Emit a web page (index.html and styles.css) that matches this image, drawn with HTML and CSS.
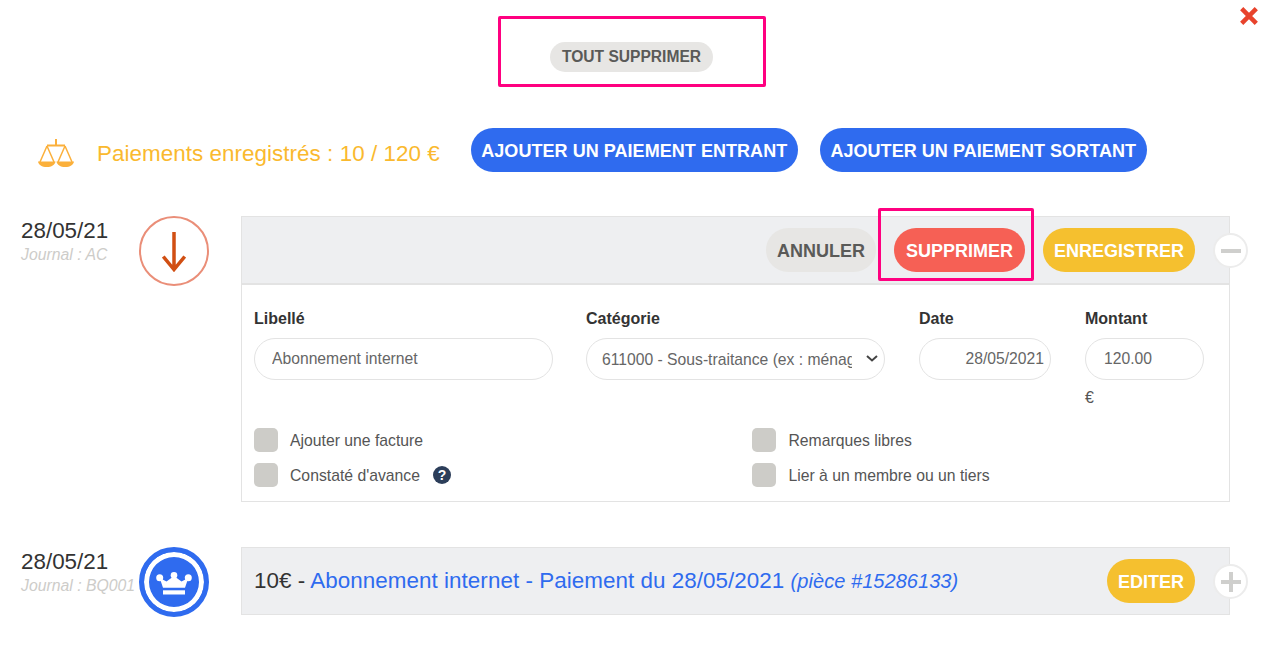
FILE: index.html
```html
<!DOCTYPE html>
<html lang="fr">
<head>
    <meta charset="UTF-8">
    <title>Paiements</title>
    <link rel="stylesheet" href="styles.css">
</head>
<body>
    <div class="modal">
        <svg class="close" viewBox="0 0 18 18" width="18" height="18"><path d="M1.700 1.700l14.600 14.600M16.300 1.700L1.700 16.300" stroke="#e8432c" stroke-width="4.500"/></svg>

        <div class="top-actions">
            <button class="btn-clear">TOUT SUPPRIMER</button>
            <div class="highlight highlight-top"></div>
        </div>

        <div class="summary">
            <svg class="scale-icon" viewBox="0 0 36 28" width="36" height="28" fill="none" stroke="#fbb03b" stroke-width="1.500">
                <path d="M18 0v7M9 6.500h18" stroke-width="2"/>
                <path d="M9 7L2 23M9 7l7 16M27 7l-7 16M27 7l7 16"/>
                <path d="M0 22.500h17.500c-.5 3.500-4 5.500-8.750 5.500S.5 26 0 22.500zM18.500 22.500H36c-.5 3.500-4 5.500-8.750 5.500S19 26 18.500 22.500z" fill="#fbb03b" stroke="none"/>
            </svg>
            <span class="summary-text">Paiements enregistrés : 10 / 120 €</span>
            <button class="btn btn-blue">AJOUTER UN PAIEMENT ENTRANT</button>
            <button class="btn btn-blue">AJOUTER UN PAIEMENT SORTANT</button>
        </div>

        <div class="payment payment-open">
            <div class="payment-date">
                <div class="date">28/05/21</div>
                <div class="journal">Journal : AC</div>
            </div>
            <div class="status status-out">
                <svg viewBox="0 0 24 40" width="24" height="40" fill="none" stroke="#d14f13" stroke-width="3.500"><path d="M12 0v37M1.300 24.500L12 37.500 22.700 24.500"/></svg>
            </div>
            <div class="panel">
                <div class="panel-head">
                    <button class="btn btn-grey">ANNULER</button>
                    <div class="delete-wrap">
                        <button class="btn btn-red">SUPPRIMER</button>
                        <div class="highlight highlight-delete"></div>
                    </div>
                    <button class="btn btn-yellow">ENREGISTRER</button>
                </div>
                <div class="toggle">
                    <svg viewBox="0 0 20 20" width="20" height="20"><path d="M0 10h20" stroke="#cfcfcd" stroke-width="4"/></svg>
                </div>
                <div class="panel-body">
                    <div class="fields">
                        <div class="field field-label">
                            <label>Libellé</label>
                            <input type="text" class="input input-label" value="Abonnement internet">
                        </div>
                        <div class="field field-category">
                            <label>Catégorie</label>
                            <div class="select-wrap">
                                <select class="input input-select">
                                    <option>611000 - Sous-traitance (ex : ménage, comptable...)</option>
                                </select>
                                <svg class="select-arrow" viewBox="0 0 12 7" width="12" height="7" fill="none" stroke="#444" stroke-width="2"><path d="M1 1l5 4.500L11 1"/></svg>
                            </div>
                        </div>
                        <div class="field field-date">
                            <label>Date</label>
                            <input type="text" class="input input-date" value="28/05/2021">
                        </div>
                        <div class="field field-amount">
                            <label>Montant</label>
                            <input type="text" class="input input-amount" value="120.00">
                            <span class="currency">€</span>
                        </div>
                    </div>
                    <div class="options">
                        <div class="option"><span class="check"></span><span class="option-text">Ajouter une facture</span></div>
                        <div class="option"><span class="check"></span><span class="option-text">Remarques libres</span></div>
                        <div class="option">
                            <span class="check"></span><span class="option-text">Constaté d'avance</span>
                            <span class="help">?</span>
                        </div>
                        <div class="option"><span class="check"></span><span class="option-text">Lier à un membre ou un tiers</span></div>
                    </div>
                </div>
            </div>
        </div>

        <div class="payment">
            <div class="payment-date">
                <div class="date">28/05/21</div>
                <div class="journal">Journal : BQ001</div>
            </div>
            <div class="status status-crown">
                <svg viewBox="0 0 36 23" width="36" height="23" fill="#fff">
                    <circle cx="3.700" cy="5.700" r="3.500"/><circle cx="18" cy="3.300" r="3.300"/><circle cx="32.300" cy="5.700" r="3.500"/>
                    <path d="M3.700 6l6.800 3.500L18 4l7.500 5.500L32.300 6 29 15.700H7z"/>
                    <path d="M7 18.300h22v4.200H7z"/>
                </svg>
            </div>
            <div class="panel">
                <div class="panel-head panel-line">
                    <div class="line-text">10€ - <span class="line-link">Abonnement internet - Paiement du 28/05/2021</span> <em class="line-ref">(pièce #15286133)</em></div>
                    <button class="btn btn-yellow">EDITER</button>
                </div>
                <div class="toggle">
                    <svg viewBox="0 0 20 20" width="20" height="20"><path d="M0 10h20M10 0v20" stroke="#cfcfcd" stroke-width="4"/></svg>
                </div>
            </div>
        </div>
    </div>
</body>
</html>
```

FILE: styles.css
```css
* {
    box-sizing: border-box;
}
body {
    margin: 0;
    font-family: "Liberation Sans", Arial, sans-serif;
    color: #333;
    background: #fff;
}
button {
    font-family: inherit;
    border: none;
    cursor: pointer;
}
.modal {
    position: relative;
    height: 655px;
    overflow: hidden;
    padding-top: 42px;
}
.close {
    position: absolute;
    top: 7px;
    right: 6px;
}
.highlight {
    position: absolute;
    border: 3px solid #ff0080;
    border-radius: 2px;
    pointer-events: none;
}
.top-actions {
    position: relative;
    width: 163px;
    margin: 0 auto 0 550px;
}
.highlight-top {
    left: -52px;
    top: -26px;
    width: 268px;
    height: 71px;
}
.btn-clear {
    display: block;
    width: 163px;
    height: 30px;
    padding: 0;
    border-radius: 15px;
    background: #e7e6e4;
    color: #5a5a58;
    font-size: 15.600px;
    font-weight: bold;
}
.summary {
    display: flex;
    align-items: center;
    height: 44px;
    margin-top: 56px;
    padding-left: 38px;
}
.scale-icon {
    margin-top: 6px;
}
.summary-text {
    margin-left: 23px;
    margin-right: 31px;
    padding-top: 8px;
    font-size: 22.400px;
    letter-spacing: 0.05px;
    color: #fab92e;
}
.btn {
    height: 44px;
    padding: 2px 12px 0;
    border-radius: 22px;
    font-size: 18px;
    font-weight: bold;
    white-space: nowrap;
}
.btn-blue {
    width: 327px;
    margin-right: 22px;
    padding: 2px 0 0;
    letter-spacing: 0.05px;
    background: #2f6bef;
    color: #fff;
}
.btn-grey {
    padding: 2px 11px 0;
    background: #e7e6e4;
    color: #5a5a58;
}
.btn-red {
    background: #f66055;
    color: #fff;
}
.btn-yellow {
    padding: 2px 11px 0;
    background: #f5c02f;
    color: #fff;
}
.payment {
    display: flex;
    align-items: flex-start;
    margin-top: 44px;
    padding-left: 21px;
}
.payment-open {
    margin-bottom: 45px;
}
.payment-date {
    width: 118px;
    padding-top: 2px;
}
.date {
    font-size: 22.400px;
    line-height: 26px;
}
.journal {
    font-size: 15.800px;
    font-style: italic;
    line-height: 22px;
    color: #cdccc9;
    white-space: nowrap;
}
.status {
    display: flex;
    align-items: center;
    justify-content: center;
    width: 70px;
    height: 70px;
    border-radius: 50%;
}
.status-out {
    border: 2px solid #ea8e78;
}
.status-out svg {
    margin-top: 2px;
}
.status-crown {
    background: #2f6bef;
    border: 5px solid #2f6bef;
    box-shadow: inset 0 0 0 5px #fff;
}
.status-crown svg {
    margin-top: 2px;
}
.panel {
    position: relative;
    width: 989px;
    margin-left: 32px;
}
.panel-head {
    display: flex;
    align-items: center;
    justify-content: flex-end;
    gap: 18px;
    height: 69px;
    padding-right: 34px;
    background: #eeeff1;
    border: 1px solid #e3e3e3;
    border-bottom-width: 2px;
}
.panel-line {
    justify-content: space-between;
    height: 68px;
    border-bottom-width: 1px;
    padding-left: 12px;
}
.line-text {
    font-size: 22.400px;
    letter-spacing: 0.05px;
}
.line-link {
    color: #2f6bef;
}
.line-ref {
    font-size: 20px;
    color: #2f6bef;
}
.delete-wrap {
    position: relative;
}
.highlight-delete {
    left: -16px;
    top: -20px;
    width: 156px;
    height: 73px;
}
.toggle {
    position: absolute;
    top: 17px;
    left: 972px;
    display: flex;
    align-items: center;
    justify-content: center;
    width: 35px;
    height: 35px;
    border-radius: 50%;
    background: #fff;
    border: 2px solid #ececec;
}
.panel-body {
    height: 217px;
    padding: 25px 12px 0;
    border: 1px solid #e3e3e3;
    border-top: none;
}
.fields {
    display: flex;
    height: 118px;
}
.field label {
    display: block;
    margin-bottom: 10px;
    font-size: 16px;
    font-weight: bold;
    line-height: 18px;
}
.field-label {
    width: 332px;
}
.field-category {
    width: 333px;
}
.field-date {
    width: 166px;
}
.field-amount {
    width: 119px;
}
.input {
    display: block;
    height: 42px;
    padding: 0 17px;
    border: 1px solid #e3e3e3;
    border-radius: 21px;
    background: #fff;
    color: #666;
    font-family: inherit;
    font-size: 15.700px;
}
.input-label {
    width: 299px;
}
.select-wrap {
    position: relative;
    width: 299px;
}
.input-select {
    width: 100%;
    padding: 0 32px 0 15px;
    appearance: none;
}
.select-arrow {
    position: absolute;
    top: 17px;
    left: 280px;
}
.input-date {
    width: 132px;
    padding: 0 6px 0 0;
    text-align: right;
}
.input-amount {
    width: 119px;
    padding-left: 18px;
}
.currency {
    display: block;
    margin-top: 9px;
    font-size: 16px;
    line-height: 18px;
    color: #555;
}
.options {
    display: grid;
    grid-template-columns: 498.400px 1fr;
    row-gap: 11px;
}
.option {
    display: flex;
    align-items: center;
    height: 24px;
    font-size: 15.750px;
    color: #555;
}
.option-text {
    padding-top: 2px;
}
.check {
    width: 24px;
    height: 24px;
    margin-right: 12px;
    border-radius: 5px;
    background: #cdccc8;
}
.help {
    display: flex;
    align-items: center;
    justify-content: center;
    width: 18px;
    height: 18px;
    margin-left: 13px;
    border-radius: 50%;
    background: #2c3e5a;
    color: #fff;
    font-size: 14px;
    font-weight: bold;
}
```
